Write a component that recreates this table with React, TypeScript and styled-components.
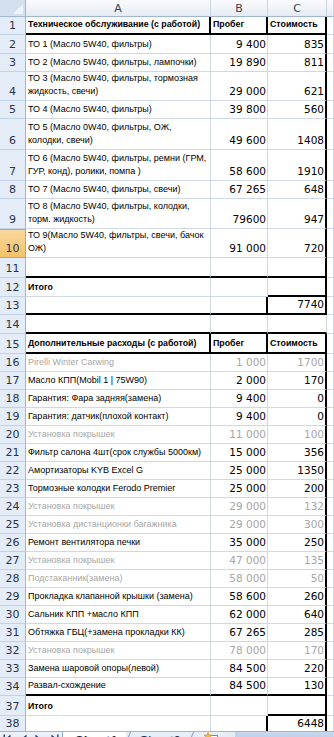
import React from 'react'
import styled, { createGlobalStyle } from 'styled-components'

const GlobalStyle = createGlobalStyle`
    html, body {
        margin: 0;
        padding: 0;
        background: #ffffff;
    }
    body {
        font-family: "Liberation Sans", Arial, sans-serif;
    }
`

const GRID = '#d0d7e5'
const HEAD_LINE = '#9eb6ce'
const MUTED = '#a6a6a6'

type Tone = 'plain' | 'muted' | 'title'

interface IRow {
    n: number
    h: number
    a?: string
    b?: string
    c?: string
    tone?: Tone
    bottom?: 'all' | 'c'
    splitAB?: boolean
    splitBC?: boolean
    edge?: boolean
    selected?: boolean
}

const rows: IRow[] = [
    { n: 1, h: 18, a: 'Техническое обслуживание (с работой)', b: 'Пробег', c: 'Стоимость', tone: 'title', bottom: 'all', splitAB: true, splitBC: true, edge: true },
    { n: 2, h: 19, a: 'ТО 1 (Масло 5W40, фильтры)', b: '9 400', c: '835', edge: true },
    { n: 3, h: 18, a: 'ТО 2 (Масло 5W40, фильтры, лампочки)', b: '19 890', c: '811', edge: true },
    { n: 4, h: 29, a: 'ТО 3 (Масло 5W40, фильтры, тормозная\nжидкость, свечи)', b: '29 000', c: '621', edge: true },
    { n: 5, h: 18, a: 'ТО 4 (Масло 5W40, фильтры)', b: '39 800', c: '560', edge: true },
    { n: 6, h: 31, a: 'ТО 5 (Масло 0W40, фильтры, ОЖ,\nколодки, свечи)', b: '49 600', c: '1408', edge: true },
    { n: 7, h: 31, a: 'ТО 6 (Масло 5W40, фильтры, ремни (ГРМ,\nГУР, конд), ролики, помпа )', b: '58 600', c: '1910', edge: true },
    { n: 8, h: 18, a: 'ТО 7 (Масло 5W40, фильтры, свечи)', b: '67 265', c: '648', edge: true },
    { n: 9, h: 30, a: 'ТО 8 (Масло 5W40, фильтры, колодки,\nторм. жидкость)', b: '79600', c: '947', edge: true },
    { n: 10, h: 27, a: 'ТО 9(Масло 5W40, фильтры, свечи, бачок\nОЖ)', b: '91 000', c: '720', edge: true, selected: true },
    { n: 11, h: 20, bottom: 'all', edge: true },
    { n: 12, h: 19, a: 'Итого', tone: 'title', bottom: 'c', edge: true },
    { n: 13, h: 18, c: '7740', bottom: 'all', splitBC: true, edge: true },
    { n: 14, h: 19, bottom: 'all' },
    { n: 15, h: 20, a: 'Дополнительные расходы (с работой)', b: 'Пробег', c: 'Стоимость', tone: 'title', bottom: 'all', splitAB: true, splitBC: true, edge: true },
    { n: 16, h: 18, a: 'Pirelli Winter Carwing', b: '1 000', c: '1700', tone: 'muted', edge: true },
    { n: 17, h: 18, a: 'Масло КПП(Mobil 1 | 75W90)', b: '2 000', c: '170', edge: true },
    { n: 18, h: 18, a: 'Гарантия: Фара задняя(замена)', b: '9 400', c: '0', edge: true },
    { n: 19, h: 18, a: 'Гарантия: датчик(плохой контакт)', b: '9 400', c: '0', edge: true },
    { n: 20, h: 18, a: 'Установка покрышек', b: '11 000', c: '100', tone: 'muted', edge: true },
    { n: 21, h: 18, a: 'Фильтр салона 4шт(срок службы 5000км)', b: '15 000', c: '356', edge: true },
    { n: 22, h: 18, a: 'Амортизаторы KYB Excel G', b: '25 000', c: '1350', edge: true },
    { n: 23, h: 18, a: 'Тормозные колодки Ferodo Premier', b: '25 000', c: '200', edge: true },
    { n: 24, h: 18, a: 'Установка покрышек', b: '29 000', c: '132', tone: 'muted', edge: true },
    { n: 25, h: 18, a: 'Установка дистанционки багажника', b: '29 000', c: '300', tone: 'muted', edge: true },
    { n: 26, h: 18, a: 'Ремонт вентилятора печки', b: '35 000', c: '250', edge: true },
    { n: 27, h: 18, a: 'Установка покрышек', b: '47 000', c: '135', tone: 'muted', edge: true },
    { n: 28, h: 18, a: 'Подстаканник(замена)', b: '58 000', c: '50', tone: 'muted', edge: true },
    { n: 29, h: 18, a: 'Прокладка клапанной крышки (замена)', b: '58 600', c: '260', edge: true },
    { n: 30, h: 18, a: 'Сальник КПП +масло КПП', b: '62 000', c: '640', edge: true },
    { n: 31, h: 18, a: 'Обтяжка ГБЦ(+замена прокладки КК)', b: '67 265', c: '285', edge: true },
    { n: 32, h: 18, a: 'Установка покрышек', b: '78 000', c: '170', tone: 'muted', edge: true },
    { n: 33, h: 18, a: 'Замена шаровой опоры(левой)', b: '84 500', c: '220', edge: true },
    { n: 34, h: 18, a: 'Развал-схождение', b: '84 500', c: '130', bottom: 'all', edge: true },
    { n: 37, h: 20, a: 'Итого', tone: 'title', bottom: 'c', edge: true },
    { n: 38, h: 17, c: '6448', splitBC: true, edge: true },
]

const Page = styled.div`
    width: 334px;
    height: 737px;
    overflow: hidden;
    display: flex;
    flex-direction: column;
`

const Sheet = styled.div`
    flex: 0 0 731px;
    overflow: hidden;
    display: flex;
    flex-direction: column;
`

const HeaderRow = styled.div`
    flex: 0 0 17px;
    display: flex;
`

const Corner = styled.div`
    box-sizing: border-box;
    position: relative;
    flex: 0 0 26px;
    background: #d5e0ef;
    border-right: 1px solid ${HEAD_LINE};
    border-bottom: 1px solid ${HEAD_LINE};

    &::after {
        content: '';
        position: absolute;
        right: 2px;
        bottom: 2px;
        border-left: 10px solid transparent;
        border-bottom: 10px solid #eef3fa;
    }
`

const ColHead = styled.div<{ $w?: number }>`
    box-sizing: border-box;
    flex: ${p => (p.$w ? `0 0 ${p.$w}px` : '1 1 auto')};
    display: flex;
    align-items: center;
    justify-content: center;
    background: linear-gradient(#fafbfd, #e6ebf2);
    border-right: 1px solid #c9d5e4;
    border-bottom: 1px solid ${HEAD_LINE};
    font-family: "DejaVu Sans", sans-serif;
    font-size: 11px;
    color: #3a4250;
`

const Row = styled.div<{ $h: number }>`
    flex: 0 0 ${p => p.$h}px;
    display: flex;
`

const RowHead = styled.div<{ $selected?: boolean }>`
    box-sizing: border-box;
    flex: 0 0 26px;
    display: flex;
    align-items: flex-end;
    justify-content: center;
    padding-bottom: 1px;
    background: ${p => (p.$selected ? 'linear-gradient(#f9d9a0, #f3c26a)' : '#e4ecf7')};
    border-right: 1px solid ${p => (p.$selected ? '#f29536' : HEAD_LINE)};
    border-bottom: 1px solid ${p => (p.$selected ? '#f29536' : '#c3d3e7')};
    box-shadow: ${p => (p.$selected ? 'inset 0 1px 0 #f29536' : 'none')};
    font-family: "DejaVu Sans", sans-serif;
    font-size: 11px;
    line-height: 14px;
    color: #26344a;
`

const Cell = styled.div<{ $w?: number; $thickBottom?: boolean; $thickRight?: boolean; $right?: boolean }>`
    box-sizing: border-box;
    flex: ${p => (p.$w ? `0 0 ${p.$w}px` : '1 1 auto')};
    display: flex;
    align-items: flex-end;
    justify-content: ${p => (p.$right ? 'flex-end' : 'flex-start')};
    padding: 0 1px 2px 2px;
    overflow: hidden;
    border-right: ${p => (p.$thickRight ? '2px solid #000' : `1px solid ${GRID}`)};
    border-bottom: ${p => (p.$thickBottom ? '2px solid #000' : `1px solid ${GRID}`)};
`

const Label = styled.span<{ $tone: Tone }>`
    font-family: "Liberation Sans", Arial, sans-serif;
    font-size: ${p => (p.$tone === 'title' ? '8.8px' : '9px')};
    font-weight: ${p => (p.$tone === 'title' ? 700 : 400)};
    line-height: 13px;
    white-space: pre;
    color: ${p => (p.$tone === 'muted' ? MUTED : '#000')};
`

const Num = styled.span<{ $muted?: boolean }>`
    font-family: "DejaVu Sans", sans-serif;
    font-size: 10.5px;
    line-height: 14px;
    white-space: pre;
    color: ${p => (p.$muted ? MUTED : '#000')};
`

const TabBar = styled.div`
    flex: 0 0 22px;
    display: flex;
    align-items: stretch;
    background: #e3ebf5;
    border-top: 1px solid ${HEAD_LINE};
`

const NavButtons = styled.div`
    flex: 0 0 62px;
    display: flex;
    align-items: flex-start;
    justify-content: space-around;
    padding-top: 2px;
    background: linear-gradient(#eef3fa, #d3deed);
    border-right: 1px solid #8ea9cc;
    color: #1f3c66;
`

const SheetTab = styled.div<{ $active?: boolean }>`
    position: relative;
    display: flex;
    align-items: flex-start;
    padding: 1px 8px 0 12px;
    margin-left: ${p => (p.$active ? '0' : '2px')};
    background: ${p => (p.$active ? '#ffffff' : 'linear-gradient(#e9f0f8, #d4e0ef)')};
    font-family: "Liberation Sans", Arial, sans-serif;
    font-size: 13px;
    font-weight: ${p => (p.$active ? 700 : 400)};
    color: #15284a;

    &::before {
        content: '';
        display: ${p => (p.$active ? 'none' : 'block')};
        position: absolute;
        left: 2px;
        top: 0;
        bottom: 0;
        border-left: 1px solid #7a98c0;
        transform: skewX(-22deg);
        transform-origin: top;
    }
`

const InsertTab = styled(SheetTab)`
    padding: 0 6px 0 12px;
`

const TabFill = styled.div`
    flex: 1 1 auto;
    margin-left: 10px;
    background: linear-gradient(#c7d7ed, #adc4e3);
`

const NavIcon = ({ dir, bar }: { dir: 'l' | 'r'; bar?: boolean }) => (
    <svg width="9" height="9" viewBox="0 0 9 9">
        {dir === 'l' ? (
            <>
                {bar && <rect x="0.5" y="0.5" width="1.4" height="8" fill="currentColor" />}
                <path d="M7.5 0.5 L3 4.5 L7.5 8.5 Z" fill="currentColor" />
            </>
        ) : (
            <>
                <path d="M1.5 0.5 L6 4.5 L1.5 8.5 Z" fill="currentColor" />
                {bar && <rect x="7.1" y="0.5" width="1.4" height="8" fill="currentColor" />}
            </>
        )}
    </svg>
)

const NewSheetIcon = () => (
    <svg width="16" height="14" viewBox="0 0 16 14">
        <rect x="4.5" y="3.5" width="10" height="10" fill="#ffffff" stroke="#6b88b3" />
        <path d="M5 0.5 L6.2 3 L9 3.2 L6.9 5 L7.6 7.8 L5 6.3 L2.4 7.8 L3.1 5 L1 3.2 L3.8 3 Z" fill="#f7b733" stroke="#d98b16" strokeWidth="0.6" />
    </svg>
)

const SheetRow = ({ r }: { r: IRow }) => {
    const tone = r.tone ?? 'plain'
    const thickAll = r.bottom === 'all'
    const thickC = thickAll || r.bottom === 'c'
    const isTitle = tone === 'title'
    return (
        <Row $h={r.h}>
            <RowHead $selected={r.selected}>{r.n}</RowHead>
            <Cell $w={185} $thickBottom={thickAll} $thickRight={r.splitAB}>
                {r.a && <Label $tone={tone}>{r.a}</Label>}
            </Cell>
            <Cell $w={57} $thickBottom={thickAll} $thickRight={r.splitBC} $right={!isTitle}>
                {r.b && (isTitle ? <Label $tone={tone}>{r.b}</Label> : <Num $muted={tone === 'muted'}>{r.b}</Num>)}
            </Cell>
            <Cell $w={59} $thickBottom={thickC} $thickRight={r.edge} $right={!isTitle}>
                {r.c && (isTitle ? <Label $tone={tone}>{r.c}</Label> : <Num $muted={tone === 'muted'}>{r.c}</Num>)}
            </Cell>
            <Cell />
        </Row>
    )
}

export default function App() {
    return (
        <Page>
            <GlobalStyle />
            <Sheet>
                <HeaderRow>
                    <Corner />
                    <ColHead $w={185}>A</ColHead>
                    <ColHead $w={57}>B</ColHead>
                    <ColHead $w={59}>C</ColHead>
                    <ColHead />
                </HeaderRow>
                {rows.map(r => (
                    <SheetRow key={r.n} r={r} />
                ))}
            </Sheet>
            <TabBar>
                <NavButtons>
                    <NavIcon dir="l" bar />
                    <NavIcon dir="l" />
                    <NavIcon dir="r" />
                    <NavIcon dir="r" bar />
                </NavButtons>
                <SheetTab $active>Sheet1</SheetTab>
                <SheetTab>Sheet2</SheetTab>
                <InsertTab>
                    <NewSheetIcon />
                </InsertTab>
                <TabFill />
            </TabBar>
        </Page>
    )
}
